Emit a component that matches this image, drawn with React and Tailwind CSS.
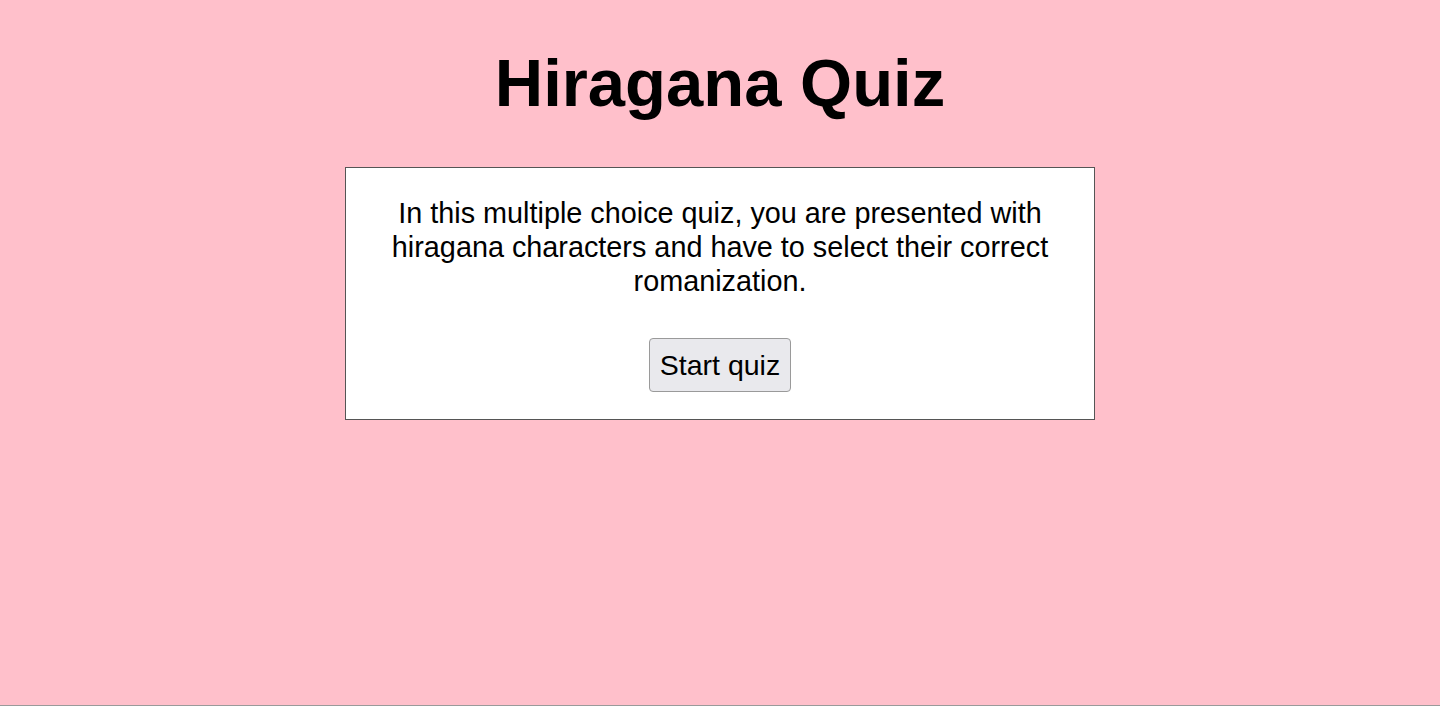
import React from 'react'

const App = () => {
  return (
    <div className="h-[706px] bg-[#ffc0cb] border-b border-[#9a9a9a] font-['Liberation_Sans',Arial,sans-serif] text-black overflow-hidden">
      {/* Title */}
      <h1 className="text-center text-[67px] font-bold leading-[78px] pt-[44px] mb-[45px]">Hiragana Quiz</h1>

      {/* Intro card */}
      <div className="w-[750px] mx-auto bg-white border border-[#555] px-[40px] pb-[27px] text-center">
        <p className="text-[28.8px] leading-[34px] pt-[28px] mb-[40px]">
          In this multiple choice quiz, you are presented with hiragana characters and have to select their correct romanization.
        </p>
        <button className="bg-[#e9e9ed] border border-[#9a9a9a] rounded-[4px] px-[10px] h-[54px] text-[28.5px] leading-[32px]">
          Start quiz
        </button>
      </div>
    </div>
  )
}

export default App
